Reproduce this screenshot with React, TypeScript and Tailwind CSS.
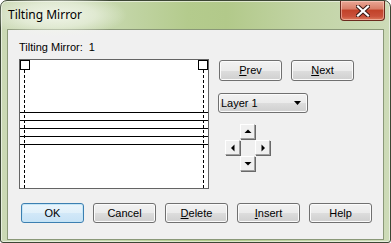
import React from "react";

const ui = { fontFamily: '"Liberation Sans", Arial, sans-serif' };
const title = { fontFamily: '"Noto Sans", "Open Sans", sans-serif' };

function Btn({
  children,
  def,
  className = "",
}: {
  children: React.ReactNode;
  def?: boolean;
  className?: string;
}) {
  return (
    <div
      className={
        "flex items-center justify-center rounded-[3px] border text-[11px] text-black " +
        (def
          ? "border-[#3c7fb1] bg-[linear-gradient(#eaf5fc_0%,#e1f0fa_50%,#d2e8f8_51%,#c7e2f6_100%)] shadow-[inset_0_0_0_1px_#c4e5f6] "
          : "border-[#707070] bg-[linear-gradient(#f2f2f2_0%,#ebebeb_50%,#dddddd_51%,#cfcfcf_100%)] shadow-[inset_0_0_0_1px_#fbfbfb] ") +
        className
      }
      style={ui}
    >
      {children}
    </div>
  );
}

function Arrow({ dir }: { dir: "up" | "down" | "left" | "right" }) {
  const pts = {
    up: "3.5,8 10.5,8 7,4.5",
    down: "3.5,5 10.5,5 7,8.5",
    left: "8.5,3.5 8.5,10.5 5,7",
    right: "5.5,3.5 5.5,10.5 9,7",
  }[dir];
  return (
    <div className="flex h-[15px] w-[15px] items-center justify-center border-t border-l border-t-white border-l-white border-r border-b border-r-[#a0a0a0] border-b-[#a0a0a0] bg-[#f0f0f0] shadow-[1px_1px_0_#696969]">
      <svg width="13" height="13" viewBox="0 0 13 13">
        <polygon points={pts} fill="#000" />
      </svg>
    </div>
  );
}

function Mirror() {
  const lines = [52, 60, 68, 76, 84];
  return (
    <div className="h-[130px] w-[190px] border border-[#646464] bg-white">
      <svg width="188" height="128" viewBox="0 0 188 128" className="block">
        <rect x="0.5" y="0.5" width="9" height="9" fill="none" stroke="#000" />
        <rect x="178.5" y="0.5" width="9" height="9" fill="none" stroke="#000" />
        <line x1="4.5" y1="10" x2="4.5" y2="128" stroke="#000" strokeDasharray="3 2" />
        <line x1="183.5" y1="10" x2="183.5" y2="128" stroke="#000" strokeDasharray="3 2" />
        {lines.map((y) => (
          <line key={y} x1="0" y1={y + 0.5} x2="188" y2={y + 0.5} stroke="#000" />
        ))}
      </svg>
    </div>
  );
}

export default function App() {
  return (
    <div className="h-[243px] w-[391px] overflow-hidden bg-white">
      <div className="relative flex h-[243px] w-[391px] flex-col rounded-t-[7px] rounded-b-[3px] border border-[#3c4634] bg-[linear-gradient(90deg,#cbd9b5_0%,#c4d6a9_30%,#b4cb8d_48%,#b2c98a_58%,#c2d4a5_78%,#cddbb8_100%)] px-[6px] pb-[2px] shadow-[inset_0_0_0_1px_rgba(255,255,255,0.55)]">
        {/* title glow */}
        <div className="pointer-events-none absolute left-[-14px] top-[-8px] h-[44px] w-[140px] rounded-full bg-[radial-gradient(closest-side,rgba(242,246,235,0.95),rgba(242,246,235,0.6)_55%,rgba(242,246,235,0))]" />
        {/* title bar */}
        <div className="relative flex h-[28px] items-start justify-between">
          <div className="pl-[1px] pt-[6px] text-[12px] leading-[15px] text-black" style={title}>
            Tilting Mirror
          </div>
          <div className="mr-[-1px] flex h-[20px] w-[45px] items-center justify-center rounded-b-[4px] border border-t-0 border-[#6b2a1e] bg-[linear-gradient(#e9a795_0%,#d9806a_40%,#c2432a_50%,#c9503a_80%,#dc7a5c_100%)] shadow-[inset_0_0_0_1px_rgba(255,220,210,0.5)]">
            <svg width="14" height="12" viewBox="0 0 14 12">
              <path
                d="M2 1.5 L12 10.5 M12 1.5 L2 10.5"
                stroke="#3a1a14"
                strokeWidth="4.2"
                strokeLinecap="square"
              />
              <path
                d="M2 1.5 L12 10.5 M12 1.5 L2 10.5"
                stroke="#ffffff"
                strokeWidth="2.2"
                strokeLinecap="square"
              />
            </svg>
          </div>
        </div>
        {/* client area */}
        <div className="flex flex-1 flex-col border border-[#8a9878] bg-[#f0f0f0] pl-[11px] pt-[11px]" style={ui}>
          <div className="flex">
            <div className="flex flex-col">
              <div className="flex text-[11px] leading-[13px] text-black">
                <span>Tilting Mirror:</span>
                <span className="ml-[6px]">1</span>
              </div>
              <div className="mt-[5px]">
                <Mirror />
              </div>
            </div>
            <div className="ml-[10px] flex flex-col pt-[19px]">
              <div className="flex gap-[9px]">
                <Btn className="h-[21px] w-[63px]">
                  <span>
                    <u>P</u>rev
                  </span>
                </Btn>
                <Btn className="h-[21px] w-[63px]">
                  <span>
                    <u>N</u>ext
                  </span>
                </Btn>
              </div>
              <div className="ml-[-1px] mt-[12px] flex h-[20px] w-[90px] items-center justify-between rounded-[3px] border border-[#707070] bg-[linear-gradient(#f2f2f2_0%,#ebebeb_50%,#dddddd_51%,#cfcfcf_100%)] pl-[2px] pr-[5px] text-[11px] shadow-[inset_0_0_0_1px_#fbfbfb]">
                <span>Layer 1</span>
                <svg width="8" height="5" viewBox="0 0 8 5">
                  <polygon points="0,0 7,0 3.5,4" fill="#000" />
                </svg>
              </div>
              <div className="ml-[6px] mt-[11px] grid w-[44px] grid-cols-[15px_15px_15px] grid-rows-[16px_16px_16px]">
                <div />
                <Arrow dir="up" />
                <div />
                <Arrow dir="left" />
                <div />
                <Arrow dir="right" />
                <div />
                <Arrow dir="down" />
                <div />
              </div>
            </div>
          </div>
          <div className="ml-[2px] mt-[14px] flex gap-[9px]">
            <Btn def className="h-[20px] w-[63px]">OK</Btn>
            <Btn className="h-[20px] w-[63px]">Cancel</Btn>
            <Btn className="h-[20px] w-[63px]">
              <span>
                <u>D</u>elete
              </span>
            </Btn>
            <Btn className="h-[20px] w-[63px]">
              <span>
                <u>I</u>nsert
              </span>
            </Btn>
            <Btn className="h-[20px] w-[63px]">Help</Btn>
          </div>
        </div>
      </div>
    </div>
  );
}
